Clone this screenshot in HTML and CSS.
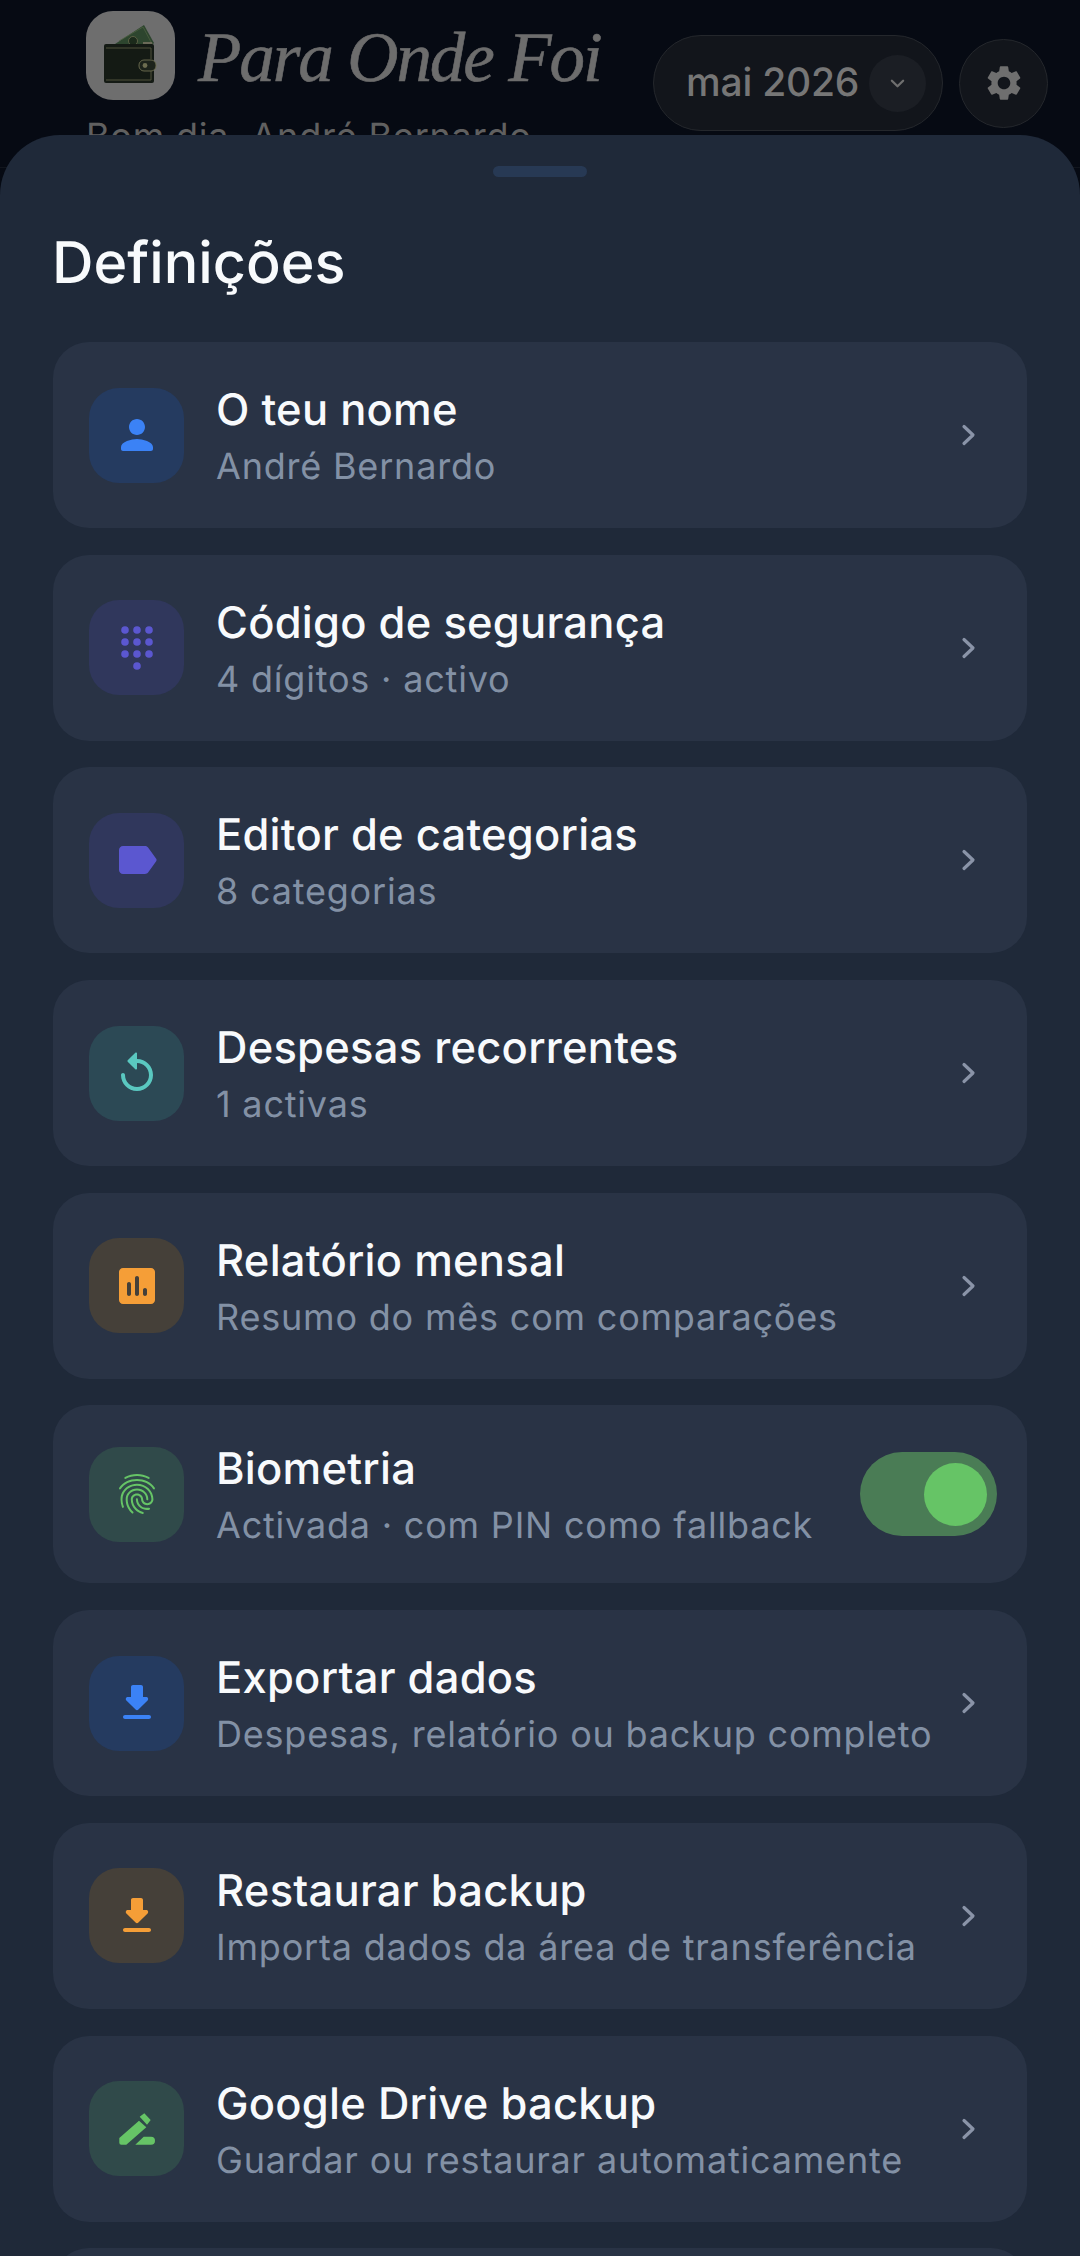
FILE: index.html
```html
<!DOCTYPE html>
<html lang="pt">
<head>
<meta charset="utf-8">
<title>Para Onde Foi</title>
<link rel="stylesheet" href="styles.css">
</head>
<body>
<div class="screen">
  <header class="topbar">
    <div class="brand">
      <div class="brand-row">
        <div class="app-icon">
          <svg viewBox="0 0 89 89" width="89" height="89">
            <path d="M29 33 L58 14 L68 32 L66 34 Z" fill="#2d452e"/>
            <path d="M33 30 L57 16 L65 31" fill="none" stroke="#4c5f40" stroke-width=".8"/>
            <circle cx="47" cy="30" r="4.5" fill="#1b2a1b" stroke="#6a6a4c" stroke-width=".8"/>
            <path d="M57 31 L66 31 L67 35 L57 35 Z" fill="#6b6a58"/>
            <rect x="18" y="33" width="50" height="39" rx="2" fill="#141a14"/>
            <path d="M20 37H65V48M65 60V69H20" fill="none" stroke="#55573e" stroke-width=".9"/>
            <rect x="53" y="49" width="17" height="11" rx="5" fill="#1d231b" stroke="#6d6d50" stroke-width=".9"/>
            <circle cx="59" cy="54.500" r="2.400" fill="#6d6d50"/>
          </svg>
        </div>
        <div class="brand-name">Para Onde Foi</div>
      </div>
      <div class="greeting">Bom dia, André Bernardo</div>
    </div>
    <div class="top-actions">
      <div class="month-pill">
        <span class="month-label">mai 2026</span>
        <span class="month-caret">
          <svg viewBox="0 0 24 24" width="27" height="27"><path d="M7 9.5l5 5 5-5" fill="none" stroke="#6f6f6f" stroke-width="2" stroke-linecap="round" stroke-linejoin="round"/></svg>
        </span>
      </div>
      <div class="gear-btn">
        <svg viewBox="0 0 24 24" width="42" height="42"><path fill="#6f6f6f" d="M19.14 12.94c.04-.3.06-.61.06-.94 0-.32-.02-.64-.07-.94l2.03-1.58c.18-.14.23-.41.12-.61l-1.92-3.32c-.12-.22-.37-.29-.59-.22l-2.39.96c-.5-.38-1.03-.7-1.62-.94l-.36-2.54c-.04-.24-.24-.41-.48-.41h-3.84c-.24 0-.43.17-.47.41l-.36 2.54c-.59.24-1.13.57-1.62.94l-2.39-.96c-.22-.08-.47 0-.59.22L2.74 8.87c-.12.21-.08.47.12.61l2.03 1.58c-.05.3-.09.63-.09.94s.02.64.07.94l-2.03 1.58c-.18.14-.23.41-.12.61l1.92 3.32c.12.22.37.29.59.22l2.39-.96c.5.38 1.03.7 1.62.94l.36 2.54c.05.24.24.41.48.41h3.84c.24 0 .44-.17.47-.41l.36-2.54c.59-.24 1.13-.56 1.62-.94l2.39.96c.22.08.47 0 .59-.22l1.92-3.32c.12-.22.07-.47-.12-.61l-2.01-1.58zM12 15.6c-1.98 0-3.6-1.62-3.6-3.6s1.62-3.6 3.6-3.6 3.6 1.62 3.6 3.6-1.62 3.6-3.6 3.6z"/></svg>
      </div>
    </div>
  </header>

  <section class="sheet">
    <div class="handle"></div>
    <h1 class="sheet-title">Definições</h1>
    <div class="list">

      <div class="row">
        <div class="tile tile-blue"><svg class="glyph" viewBox="0 0 24 24"><path d="M12 12c2.21 0 4-1.79 4-4s-1.79-4-4-4-4 1.79-4 4 1.79 4 4 4zm0 2c-2.67 0-8 1.34-8 4v1c0 .55.45 1 1 1h14c.55 0 1-.45 1-1v-1c0-2.66-5.33-4-8-4z"/></svg></div>
        <div class="text"><div class="name">O teu nome</div><div class="sub">André Bernardo</div></div>
        <svg class="chev" viewBox="0 0 16 24"><path d="M3 3.500l9 8.500-9 8.500"/></svg>
      </div>

      <div class="row">
        <div class="tile tile-purple"><svg class="glyph" viewBox="0 0 24 24"><circle cx="6" cy="3" r="1.9"/><circle cx="12" cy="3" r="1.9"/><circle cx="18" cy="3" r="1.9"/><circle cx="6" cy="9" r="1.9"/><circle cx="12" cy="9" r="1.9"/><circle cx="18" cy="9" r="1.9"/><circle cx="6" cy="15" r="1.9"/><circle cx="12" cy="15" r="1.9"/><circle cx="18" cy="15" r="1.9"/><circle cx="12" cy="21" r="1.9"/></svg></div>
        <div class="text"><div class="name">Código de segurança</div><div class="sub">4 dígitos · activo</div></div>
        <svg class="chev" viewBox="0 0 16 24"><path d="M3 3.500l9 8.500-9 8.500"/></svg>
      </div>

      <div class="row">
        <div class="tile tile-purple"><svg class="glyph" viewBox="0 0 24 24"><path d="M17.63 5.84C17.27 5.33 16.67 5 16 5L5 5.01C3.9 5.01 3 5.9 3 7v10c0 1.1.9 1.99 2 1.99L16 19c.67 0 1.27-.33 1.63-.84l3.96-5.58c.25-.35.25-.81 0-1.16l-3.96-5.58z"/></svg></div>
        <div class="text"><div class="name">Editor de categorias</div><div class="sub">8 categorias</div></div>
        <svg class="chev" viewBox="0 0 16 24"><path d="M3 3.500l9 8.500-9 8.500"/></svg>
      </div>

      <div class="row">
        <div class="tile tile-teal"><svg class="glyph" viewBox="0 0 24 24"><path d="M12 5V2.210c0-.45-.54-.67-.85-.35L7.350 5.650c-.2.2-.2.51 0 .71l3.790 3.790c.32.31.86.09.86-.36V7c3.310 0 6 2.690 6 6 0 3.310-2.690 6-6 6s-6-2.690-6-6c0-.55-.45-1-1-1s-1 .45-1 1c0 4.420 3.580 8 8 8s8-3.580 8-8-3.580-8-8-8z"/></svg></div>
        <div class="text"><div class="name">Despesas recorrentes</div><div class="sub">1 activas</div></div>
        <svg class="chev" viewBox="0 0 16 24"><path d="M3 3.500l9 8.500-9 8.500"/></svg>
      </div>

      <div class="row">
        <div class="tile tile-orange"><svg class="glyph" viewBox="0 0 24 24"><path fill-rule="evenodd" d="M19 3H5c-1.1 0-2 .9-2 2v14c0 1.1.9 2 2 2h14c1.1 0 2-.9 2-2V5c0-1.1-.9-2-2-2zM8 17c-.55 0-1-.45-1-1v-5c0-.55.45-1 1-1s1 .45 1 1v5c0 .55-.45 1-1 1zm4 0c-.55 0-1-.45-1-1V8c0-.55.45-1 1-1s1 .45 1 1v8c0 .55-.45 1-1 1zm4 0c-.55 0-1-.45-1-1v-2c0-.55.45-1 1-1s1 .45 1 1v2c0 .55-.45 1-1 1z"/></svg></div>
        <div class="text"><div class="name">Relatório mensal</div><div class="sub">Resumo do mês com comparações</div></div>
        <svg class="chev" viewBox="0 0 16 24"><path d="M3 3.500l9 8.500-9 8.500"/></svg>
      </div>

      <div class="row row-toggle">
        <div class="tile tile-green"><svg class="glyph" viewBox="0 0 24 24"><path d="M17.81 4.47c-.08 0-.16-.02-.23-.06C15.66 3.42 14 3 12.01 3c-1.98 0-3.86.47-5.57 1.41-.24.13-.54.04-.68-.2-.13-.24-.04-.55.2-.68C7.82 2.52 9.86 2 12.01 2c2.13 0 3.99.47 6.03 1.52.25.13.34.43.21.67-.09.18-.26.28-.44.28zM3.5 9.72c-.1 0-.2-.03-.29-.09-.23-.16-.28-.47-.12-.7.99-1.4 2.25-2.5 3.75-3.27C9.98 4.04 14 4.03 17.15 5.65c1.5.77 2.76 1.86 3.75 3.25.16.22.11.54-.12.7-.23.16-.54.11-.7-.12-.9-1.26-2.04-2.25-3.39-2.94-2.87-1.47-6.54-1.47-9.4.01-1.36.7-2.5 1.7-3.4 2.96-.08.14-.23.21-.39.21zm6.25 12.07c-.13 0-.26-.05-.35-.15-.87-.87-1.34-1.43-2.01-2.64-.69-1.23-1.05-2.73-1.05-4.34 0-2.97 2.54-5.39 5.66-5.39s5.66 2.42 5.66 5.39c0 .28-.22.5-.5.5s-.5-.22-.5-.5c0-2.42-2.09-4.39-4.66-4.39s-4.66 1.97-4.66 4.39c0 1.44.32 2.77.93 3.85.64 1.15 1.08 1.64 1.85 2.42.19.2.19.51 0 .71-.11.1-.24.15-.37.15zm7.17-1.85c-1.19 0-2.24-.3-3.1-.89-1.49-1.01-2.38-2.65-2.38-4.39 0-.28.22-.5.5-.5s.5.22.5.5c0 1.41.72 2.74 1.94 3.56.71.48 1.54.71 2.54.71.24 0 .64-.03 1.04-.1.27-.05.53.13.58.41.05.27-.13.53-.41.58-.57.11-1.07.12-1.21.12zM14.91 22c-.04 0-.09-.01-.13-.02-1.59-.44-2.63-1.03-3.72-2.1-1.4-1.39-2.17-3.24-2.17-5.22 0-1.62 1.38-2.94 3.08-2.94s3.08 1.32 3.08 2.94c0 1.07.93 1.94 2.08 1.94s2.08-.87 2.08-1.94c0-3.77-3.25-6.83-7.25-6.83-2.84 0-5.44 1.58-6.61 4.03-.39.81-.59 1.76-.59 2.8 0 .78.07 2.01.67 3.61.1.26-.03.55-.29.64-.26.1-.55-.04-.64-.29-.49-1.31-.73-2.61-.73-3.96 0-1.2.23-2.29.68-3.24 1.33-2.79 4.28-4.6 7.51-4.6 4.55 0 8.25 3.51 8.25 7.83 0 1.62-1.38 2.94-3.08 2.94s-3.08-1.32-3.08-2.94c0-1.07-.93-1.94-2.08-1.94s-2.08.87-2.08 1.94c0 1.71.66 3.31 1.87 4.51.95.94 1.86 1.46 3.27 1.85.27.07.42.35.35.61-.05.23-.26.38-.47.38z"/></svg></div>
        <div class="text"><div class="name">Biometria</div><div class="sub">Activada · com PIN como fallback</div></div>
        <div class="toggle"><div class="knob"></div></div>
      </div>

      <div class="row">
        <div class="tile tile-blue"><svg class="glyph" viewBox="0 0 24 24"><path d="M16.59 9H15V4c0-.55-.45-1-1-1h-4c-.55 0-1 .45-1 1v5H7.41c-.89 0-1.34 1.08-.71 1.71l4.59 4.59c.39.39 1.02.39 1.41 0l4.59-4.59c.63-.63.19-1.71-.7-1.71zM5 19c0 .55.45 1 1 1h12c.55 0 1-.45 1-1s-.45-1-1-1H6c-.55 0-1 .45-1 1z"/></svg></div>
        <div class="text"><div class="name">Exportar dados</div><div class="sub">Despesas, relatório ou backup completo</div></div>
        <svg class="chev" viewBox="0 0 16 24"><path d="M3 3.500l9 8.500-9 8.500"/></svg>
      </div>

      <div class="row">
        <div class="tile tile-orange"><svg class="glyph" viewBox="0 0 24 24"><path d="M16.59 9H15V4c0-.55-.45-1-1-1h-4c-.55 0-1 .45-1 1v5H7.41c-.89 0-1.34 1.08-.71 1.71l4.59 4.59c.39.39 1.02.39 1.41 0l4.59-4.59c.63-.63.19-1.71-.7-1.71zM5 19c0 .55.45 1 1 1h12c.55 0 1-.45 1-1s-.45-1-1-1H6c-.55 0-1 .45-1 1z"/></svg></div>
        <div class="text"><div class="name">Restaurar backup</div><div class="sub">Importa dados da área de transferência</div></div>
        <svg class="chev" viewBox="0 0 16 24"><path d="M3 3.500l9 8.500-9 8.500"/></svg>
      </div>

      <div class="row">
        <div class="tile tile-green"><svg class="glyph" viewBox="0 0 48 48"><path d="M31.300 8.300l6.400 6.700-3.700 4.700-7.300-8zM26 15.700l7.300 6.600-20 17.400H8.300a2 2 0 0 1-2-2V33zM22.300 39.700l8.400-8H38a4 4 0 0 1 0 8z"/></svg></div>
        <div class="text"><div class="name">Google Drive backup</div><div class="sub">Guardar ou restaurar automaticamente</div></div>
        <svg class="chev" viewBox="0 0 16 24"><path d="M3 3.500l9 8.500-9 8.500"/></svg>
      </div>

      <div class="row"></div>
    </div>
  </section>
</div>
</body>
</html>
```
FILE: styles.css
```css
* { box-sizing: border-box; }
html, body { margin: 0; padding: 0; }
body {
  width: 1080px;
  height: 2256px;
  overflow: hidden;
  background: #060a13;
  font-family: Inter, "Noto Sans", sans-serif;
  text-rendering: geometricPrecision;
}
.screen { position: relative; width: 1080px; height: 2256px; overflow: hidden; }

.topbar {
  display: flex;
  justify-content: space-between;
  align-items: flex-start;
  padding: 11px 32px 0 86px;
  height: 168px;
  border-bottom: 1.5px solid #11151d;
}
.brand-row { display: flex; align-items: center; gap: 23px; }
.app-icon {
  flex: none;
  width: 89px;
  height: 89px;
  border-radius: 27px;
  background: #6e6e6e;
  overflow: hidden;
}
.app-icon svg { display: block; }
.brand-name {
  padding-top: 5px;
  font-family: "Liberation Serif", serif;
  font-style: italic;
  font-size: 71px;
  line-height: 84px;
  letter-spacing: -2.1px;
  color: #6d6d6d;
  -webkit-text-stroke: 0.6px #6d6d6d;
  white-space: nowrap;
}
.greeting {
  margin-top: 14px;
  font-size: 36px;
  line-height: 44px;
  letter-spacing: .8px;
  color: #606060;
  white-space: nowrap;
}
.top-actions { display: flex; align-items: center; gap: 16px; margin-top: 24px; }
.month-pill {
  display: flex;
  align-items: center;
  justify-content: space-between;
  width: 290px;
  height: 96px;
  padding: 0 16px 0 32px;
  border: 1.5px solid #24272c;
  border-radius: 48px;
  background: #12151b;
}
.month-label {
  padding-bottom: 2px;
  font-size: 39px;
  font-weight: 500;
  letter-spacing: -.2px;
  color: #767676;
  white-space: nowrap;
}
.month-caret {
  display: flex;
  align-items: center;
  justify-content: center;
  width: 57px;
  height: 57px;
  border-radius: 50%;
  background: #1b1e24;
}
.gear-btn {
  display: flex;
  align-items: center;
  justify-content: center;
  width: 89px;
  height: 89px;
  border: 1.5px solid #24272c;
  border-radius: 50%;
  background: #12151b;
}

.sheet {
  position: absolute;
  left: 0;
  right: 0;
  top: 135px;
  bottom: 0;
  overflow: hidden;
  padding: 31px 53px 0;
  background: #1f2939;
  border-radius: 60px 60px 0 0;
}
.handle {
  width: 94px;
  height: 11px;
  margin: 0 auto;
  border-radius: 6px;
  background: #273954;
}
.sheet-title {
  margin: 47px 0 0 -1px;
  font-size: 57.5px;
  line-height: 76px;
  font-weight: 500;
  color: #f8fafc;
}
.list { display: flex; flex-direction: column; gap: 26.7px; margin-top: 42px; }
.row {
  display: flex;
  align-items: center;
  flex: none;
  height: 186px;
  padding: 0 30px 0 36px;
  border-radius: 36px;
  background: #293345;
}
.row-toggle { height: 178px; }
.tile {
  display: flex;
  align-items: center;
  justify-content: center;
  flex: none;
  width: 95px;
  height: 95px;
  border-radius: 30px;
}
.glyph { width: 48px; height: 48px; display: block; }
.tile-blue { background: #253b60; }
.tile-blue .glyph { fill: #3b82f6; }
.tile-purple { background: #30375c; }
.tile-purple .glyph { fill: #5b57d0; }
.tile-teal { background: #2c4955; }
.tile-teal .glyph { fill: #5ac8c0; }
.tile-orange { background: #454039; }
.tile-orange .glyph { fill: #f59e37; }
.tile-green { background: #304a4a; }
.tile-green .glyph { fill: #66c466; }
.text { flex: 1; min-width: 0; margin-left: 32px; padding-top: 2px; }
.name {
  font-size: 43.5px;
  line-height: 52px;
  font-weight: 500;
  letter-spacing: .25px;
  color: #f8fafc;
  white-space: nowrap;
}
.sub {
  margin-top: 8px;
  font-size: 36px;
  line-height: 44px;
  letter-spacing: .8px;
  color: #8391a5;
  white-space: nowrap;
}
.chev {
  flex: none;
  width: 16px;
  height: 24px;
  margin-right: 20px;
  fill: none;
  stroke: #8a94a8;
  stroke-width: 3.2;
  stroke-linecap: round;
  stroke-linejoin: round;
}
.toggle {
  display: flex;
  align-items: center;
  justify-content: flex-end;
  flex: none;
  width: 137px;
  height: 84px;
  padding-right: 10px;
  border-radius: 42px;
  background: #4a7c55;
}
.knob { width: 63px; height: 63px; border-radius: 50%; background: #66c466; }
```
